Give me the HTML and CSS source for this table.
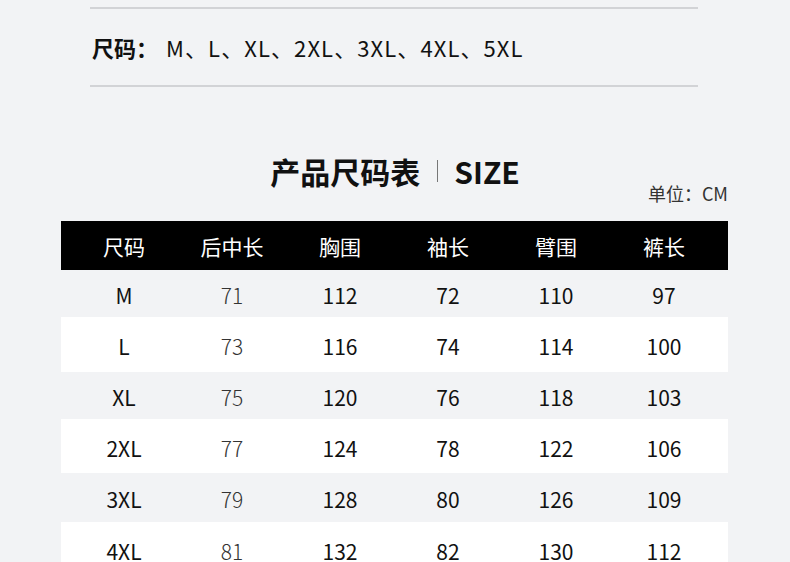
FILE: index.html
```html
<!DOCTYPE html>
<html lang="zh-CN">
<head>
<meta charset="utf-8">
<title>产品尺码表</title>
<link rel="stylesheet" href="styles.css">
</head>
<body>
<div class="page">
  <div class="spec">
    <span class="spec-label">尺码：</span>
    <span class="spec-list">M、L、XL、2XL、3XL、4XL、5XL</span>
  </div>

  <div class="title">
    <span class="title-cn">产品尺码表</span>
    <span class="title-sep"></span>
    <span class="title-en">SIZE</span>
  </div>
  <div class="unit">单位：CM</div>

  <div class="table">
    <div class="row head">
      <div>尺码</div><div>后中长</div><div>胸围</div><div>袖长</div><div>臂围</div><div>裤长</div>
    </div>
    <div class="row r1">
      <div>M</div><div class="soft">71</div><div>112</div><div>72</div><div>110</div><div>97</div>
    </div>
    <div class="row r2 white">
      <div>L</div><div class="soft">73</div><div>116</div><div>74</div><div>114</div><div>100</div>
    </div>
    <div class="row r3">
      <div>XL</div><div class="soft">75</div><div>120</div><div>76</div><div>118</div><div>103</div>
    </div>
    <div class="row r4 white">
      <div>2XL</div><div class="soft">77</div><div>124</div><div>78</div><div>122</div><div>106</div>
    </div>
    <div class="row r5">
      <div>3XL</div><div class="soft">79</div><div>128</div><div>80</div><div>126</div><div>109</div>
    </div>
    <div class="row r6 white">
      <div>4XL</div><div class="soft">81</div><div>132</div><div>82</div><div>130</div><div>112</div>
    </div>
  </div>
</div>
</body>
</html>
```

FILE: styles.css
```css
* { box-sizing: border-box; }
html, body {
  margin: 0;
  padding: 0;
  background: #f2f3f5;
}
body {
  font-family: "Noto Sans CJK SC", "Noto Sans", sans-serif;
  color: #111;
  overflow: hidden;
  height: 562px;
}
.page {
  padding-top: 7px;
}
.spec {
  margin: 0 92px 0 90px;
  height: 80px;
  border-top: 2px solid #d2d3d6;
  border-bottom: 2px solid #d2d3d6;
  display: flex;
  align-items: center;
  padding-left: 2px;
}
.spec-label {
  font-size: 22px;
  font-weight: 700;
  line-height: 30px;
  color: #111;
}
.spec-list {
  margin-left: 8px;
  font-size: 22px;
  font-weight: 400;
  line-height: 30px;
  letter-spacing: 1.1px;
  color: #111;
}
.title {
  margin-top: 71px;
  height: 26px;
  display: flex;
  justify-content: center;
  align-items: center;
}
.title-cn, .title-en {
  font-size: 30px;
  font-weight: 700;
  line-height: 26px;
  color: #111;
}
.title-sep {
  width: 1px;
  height: 22px;
  background: #777;
  margin: 0 16px 0 17px;
}
.unit {
  margin: 0 62px 0 0;
  text-align: right;
  font-size: 18px;
  line-height: 18px;
  color: #333;
}
.table {
  margin: 19px 62px 0 61px;
}
.row {
  display: grid;
  grid-template-columns: repeat(6, 108px);
  padding: 3px 10px 0 9px;
  align-items: center;
  justify-items: center;
  font-size: 21px;
  color: #111;
}
.row.head {
  height: 49px;
  padding-top: 0;
  background: #000;
  color: #fff;
  font-weight: 400;
}
.row.white { background: #fff; }
.r1 { height: 47px; }
.r2 { height: 55px; }
.r3 { height: 47px; }
.r4 { height: 54px; }
.r5 { height: 49px; }
.r6 { height: 54px; }
.soft {
  color: #333;
  font-weight: 300;
}
```
